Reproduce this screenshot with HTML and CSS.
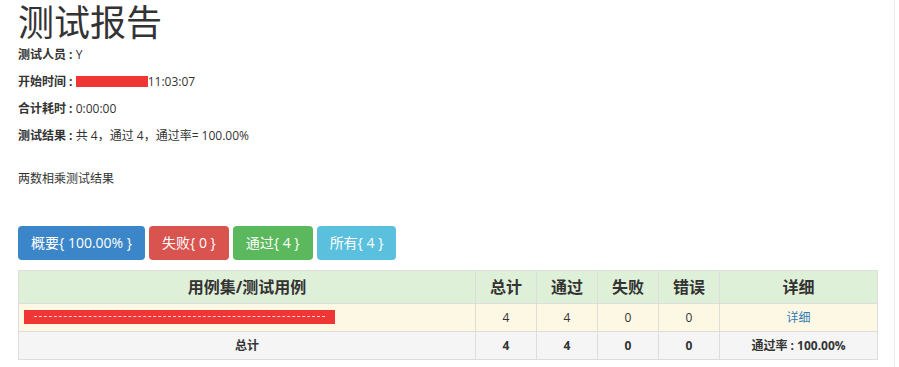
FILE: index.html
```html
<!DOCTYPE html>
<html lang="zh-CN">
<head>
  <meta charset="UTF-8">
  <meta name="viewport" content="width=device-width, initial-scale=1.0">
  <title>测试报告</title>
  <link rel="stylesheet" href="styles.css">
</head>
<body>
  <div class="page">
    <h1 class="title">测试报告</h1>
    <p class="attr"><strong>测试人员 : </strong>Y</p>
    <p class="attr"><strong>开始时间 : </strong><span class="mask mask-time"></span>11:03:07</p>
    <p class="attr"><strong>合计耗时 : </strong>0:00:00</p>
    <p class="attr"><strong>测试结果 : </strong>共 4，通过 4，通过率= 100.00%</p>
    <p class="description">两数相乘测试结果</p>

    <div class="filters">
      <button class="btn btn-primary">概要{ 100.00% }</button>
      <button class="btn btn-danger">失败{ 0 }</button>
      <button class="btn btn-success">通过{ 4 }</button>
      <button class="btn btn-info">所有{ 4 }</button>
    </div>

    <table class="result-table">
      <colgroup>
        <col class="col-name">
        <col class="col-num">
        <col class="col-num">
        <col class="col-num">
        <col class="col-num">
        <col class="col-detail">
      </colgroup>
      <thead>
        <tr class="head-row">
          <th>用例集/测试用例</th>
          <th>总计</th>
          <th>通过</th>
          <th>失败</th>
          <th>错误</th>
          <th>详细</th>
        </tr>
      </thead>
      <tbody>
        <tr class="case-row">
          <td class="name-cell"><span class="mask mask-name"></span></td>
          <td>4</td>
          <td>4</td>
          <td>0</td>
          <td>0</td>
          <td><a href="#" class="detail-link">详细</a></td>
        </tr>
        <tr class="total-row">
          <td>总计</td>
          <td>4</td>
          <td>4</td>
          <td>0</td>
          <td>0</td>
          <td>通过率 : 100.00%</td>
        </tr>
      </tbody>
    </table>
  </div>
</body>
</html>
```

FILE: styles.css
```css
html, body {
  margin: 0;
  padding: 0;
  background: #fff;
}
body {
  font-family: "Open Sans", "Noto Sans CJK SC", sans-serif;
  font-size: 12px;
  line-height: 17px;
  color: #333;
}
.page {
  width: 895px;
  min-height: 367px;
  box-sizing: border-box;
  padding: 0 18px;
  border-right: 1px solid #ececec;
}
.title {
  font-family: "Noto Sans CJK SC", sans-serif;
  font-size: 36px;
  font-weight: 400;
  line-height: 40px;
  margin: 0 0 6px;
}
.attr {
  margin: 0 0 10px;
}
.attr strong {
  font-weight: 700;
}
.description {
  margin: 26px 0 0;
}
.mask {
  display: inline-block;
  background: #f03535;
  vertical-align: middle;
}
.mask-time {
  width: 72px;
  height: 11px;
  margin-top: -3px;
}
.mask-name {
  position: relative;
  width: 311px;
  height: 14px;
}
.mask-name::after {
  content: "";
  position: absolute;
  left: 10px;
  right: 10px;
  top: 6px;
  border-top: 1px dashed rgba(255, 255, 255, 0.8);
}
.filters {
  margin-top: 39px;
  display: flex;
  gap: 4px;
}
.btn {
  font-family: inherit;
  font-size: 14px;
  line-height: 20px;
  padding: 7px 13px;
  border: 0;
  border-radius: 4px;
  color: #fff;
  cursor: pointer;
}
.btn-primary { background: #3b86c8; }
.btn-danger { background: #d9534f; }
.btn-success { background: #5cb85c; }
.btn-info { background: #5bc0de; }
.result-table {
  margin-top: 10px;
  width: 859px;
  border-collapse: collapse;
  table-layout: fixed;
}
.col-name { width: 457px; }
.col-num { width: 61px; }
.col-detail { width: 158px; }
.result-table th,
.result-table td {
  border: 1px solid #ddd;
  text-align: center;
  padding: 5px;
}
.result-table th {
  font-size: 16px;
  line-height: 22px;
  font-weight: 700;
}
.head-row { background: #dff0d8; }
.case-row { background: #fcf8e3; }
.total-row { background: #f5f5f5; font-weight: 700; }
.name-cell {
  text-align: left !important;
  line-height: 14px;
  padding-top: 4px !important;
}
.detail-link {
  color: #337ab7;
  text-decoration: none;
}
```
